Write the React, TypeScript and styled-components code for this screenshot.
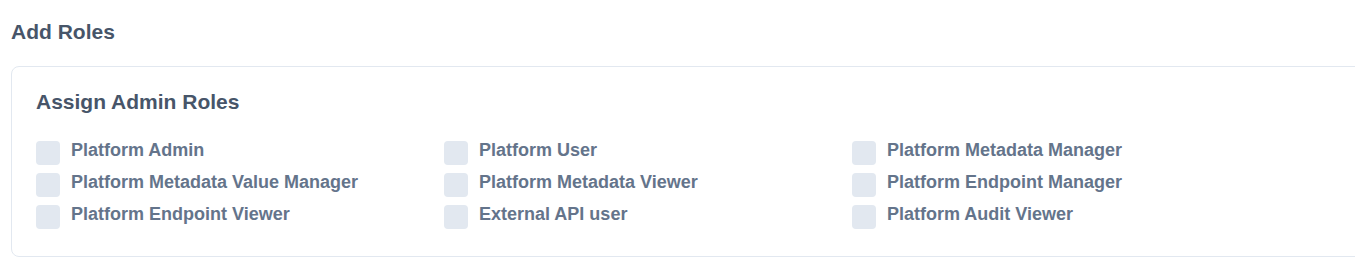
import React from "react";
import styled, { createGlobalStyle } from "styled-components";

const GlobalStyle = createGlobalStyle`
  html, body {
    margin: 0;
    padding: 0;
    background: #ffffff;
    overflow: hidden;
    font-family: "Liberation Sans", Arial, sans-serif;
  }
`;

const Page = styled.div`
  padding: 18px 0 0 11px;
`;

const Title = styled.h2`
  margin: 0 0 20px 0;
  font-size: 21px;
  line-height: 28px;
  font-weight: 700;
  color: #475569;
`;

const Card = styled.section`
  width: 1400px;
  border: 1px solid #e2e8f0;
  border-radius: 8px;
  padding: 24px 24px 27px 24px;
  box-sizing: border-box;
`;

const CardTitle = styled.h3`
  margin: 0;
  font-size: 21px;
  line-height: 22px;
  font-weight: 700;
  color: #475569;
`;

const RoleGrid = styled.div`
  display: grid;
  grid-template-columns: repeat(3, 408px);
  row-gap: 8px;
  margin-top: 28px;
`;

const RoleItem = styled.label`
  display: flex;
  align-items: flex-start;
  gap: 11px;
  height: 24px;
  cursor: pointer;
`;

const Box = styled.span`
  flex: 0 0 auto;
  width: 24px;
  height: 24px;
  border-radius: 4px;
  background: #e2e8f0;
`;

const RoleText = styled.span`
  font-size: 18px;
  line-height: 18px;
  font-weight: 700;
  color: #64748b;
`;

const roles = [
  "Platform Admin",
  "Platform User",
  "Platform Metadata Manager",
  "Platform Metadata Value Manager",
  "Platform Metadata Viewer",
  "Platform Endpoint Manager",
  "Platform Endpoint Viewer",
  "External API user",
  "Platform Audit Viewer",
];

export default function App() {
  return (
    <>
      <GlobalStyle />
      <Page>
        <Title>Add Roles</Title>
        <Card>
          <CardTitle>Assign Admin Roles</CardTitle>
          <RoleGrid>
            {roles.map((r) => (
              <RoleItem key={r}>
                <Box />
                <RoleText>{r}</RoleText>
              </RoleItem>
            ))}
          </RoleGrid>
        </Card>
      </Page>
    </>
  );
}
